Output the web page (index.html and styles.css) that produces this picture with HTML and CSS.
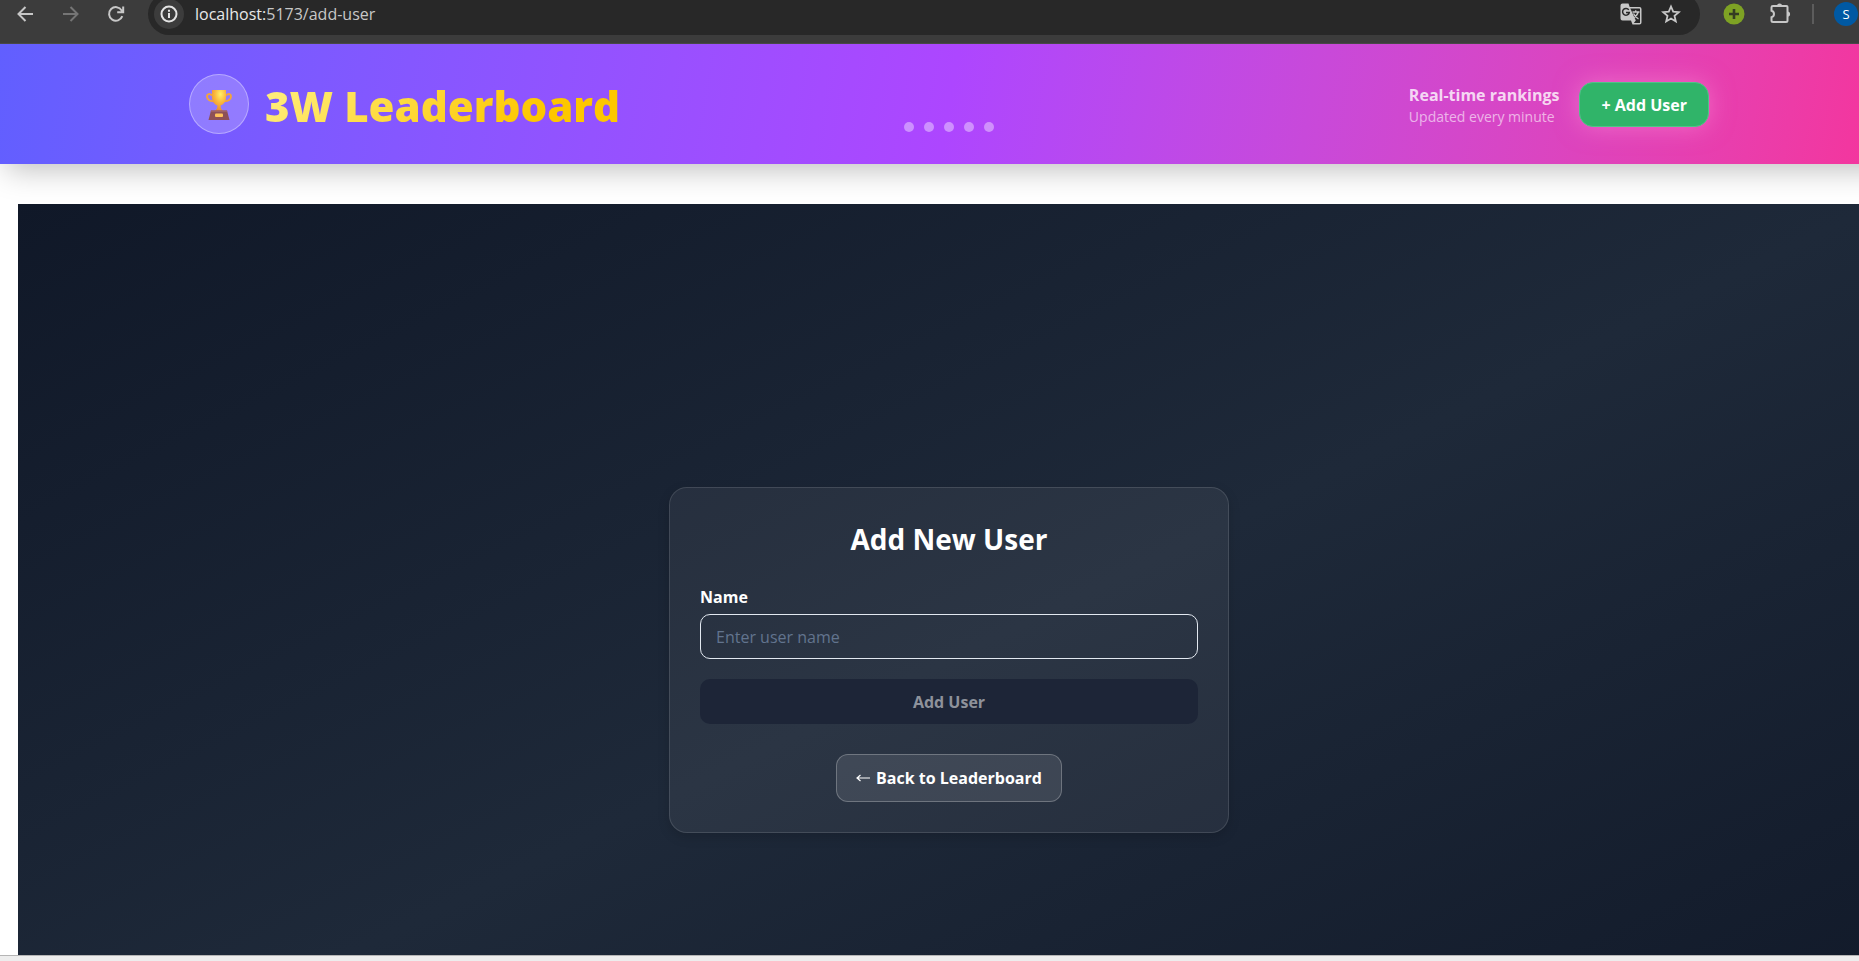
FILE: index.html
```html
<!DOCTYPE html>
<html lang="en">
<head>
<meta charset="utf-8">
<title>3W Leaderboard</title>
<link rel="stylesheet" href="styles.css">
</head>
<body>
<nav class="toolbar" aria-label="Browser">
  <button class="tool" type="button" aria-label="Back"><svg width="20" height="20" viewBox="0 0 20 20" fill="none" stroke="currentColor" stroke-width="2"><path d="M17 10H3M9.500 3 2.500 10l7 7"/></svg></button>
  <button class="tool tool-off" type="button" aria-label="Forward"><svg width="20" height="20" viewBox="0 0 20 20" fill="none" stroke="currentColor" stroke-width="2"><path d="M2 10h14M9.500 3l7 7-7 7"/></svg></button>
  <button class="tool" type="button" aria-label="Reload"><svg width="20" height="20" viewBox="0 0 20 20" fill="none" stroke="currentColor" stroke-width="2"><path d="M16.300 12.200a6.800 6.800 0 1 1-.6-5.800L17 8M17.200 2.500v5.700h-6"/></svg></button>
  <div class="address">
    <button class="info" type="button" aria-label="Site information"><svg width="18" height="18" viewBox="0 0 18 18" fill="none" stroke="currentColor" stroke-width="2"><circle cx="9" cy="9" r="7.500"/><path d="M9 8v5M9 4.800v2"/></svg></button>
    <span class="url"><span class="host">localhost:</span>5173/add-user</span>
    <button class="tool" type="button" aria-label="Translate"><svg width="22" height="22" viewBox="0 0 22 22"><path d="M2.500.5h6l1.200 3.500h9.800a2 2 0 0 1 2 2v13.500a2 2 0 0 1-2 2h-7L11 17.500H2.500a2 2 0 0 1-2-2v-13a2 2 0 0 1 2-2z" fill="#c7c7c7"/><path d="M10.300 5.500h9.200q.5 0 .5.500v13.500q0 .5-.5.500h-5.700l2-2.500z" fill="#282828"/><path d="M8.800 6.900A3.400 3.400 0 1 0 9.300 9.500H6" fill="none" stroke="#282828" stroke-width="1.500"/><path d="M12.500 9h7M15.700 7.300V9M18.200 9q-.8 3.500-5 6M13.500 10.500q1.500 3.500 5 5.500" fill="none" stroke="#c7c7c7" stroke-width="1.300"/></svg></button>
    <button class="tool" type="button" aria-label="Bookmark"><svg width="20" height="20" viewBox="0 0 20 20" fill="none" stroke="currentColor" stroke-width="1.800"><path d="m10 2.500 2.200 5.200 5.600.5-4.300 3.700 1.300 5.500-4.800-2.900-4.800 2.900 1.300-5.500-4.300-3.700 5.600-.5z"/></svg></button>
  </div>
  <div class="extensions">
    <button class="tool" type="button" aria-label="Extension"><svg width="22" height="22" viewBox="0 0 22 22"><circle cx="11" cy="11" r="10.500" fill="#7ea224"/><path d="M11 6v10M6 11h10" stroke="#343c22" stroke-width="2.600"/></svg></button>
    <button class="tool" type="button" aria-label="Extensions"><svg width="22" height="22" viewBox="0 0 22 22"><path d="M4 3h13.500q1 0 1 1v13.500q0 1.500-1.500 1.500H4q-1.500 0-1.500-1.500v-3.300a3.300 3.300 0 0 0 0-6.400V4.200Q2.500 3 4 3z" fill="none" stroke="#c7c7c7" stroke-width="2"/><path d="M8 3a2.500 2.500 0 0 1 5 0zM18.500 8.500a2.600 2.600 0 0 1 0 5.200z" fill="#c7c7c7"/></svg></button>
    <span class="divider"></span>
    <button class="profile" type="button" aria-label="Profile">S</button>
  </div>
</nav>
<div class="page">
  <header class="header">
    <div class="header-inner">
      <div class="brand">
        <span class="badge"><svg width="26" height="32" viewBox="0 0 26 32">
          <defs><radialGradient id="cup" cx=".6" cy=".2" r=".8"><stop offset="0" stop-color="#fff06a"/><stop offset=".5" stop-color="#fbb83c"/><stop offset="1" stop-color="#e88a35"/></radialGradient></defs>
          <path d="M6 7.500C3.500 5 1 6 1 8.500s3 5.200 7 4.500M20 7.500c2.500-2.500 5-1.500 5 1s-3 5.200-7 4.500" fill="none" stroke="#f3a43b" stroke-width="1.900"/>
          <path d="M6 2h14v7.500c0 4-2.500 7-5.500 8l.5 3 2 2.500H9l2-2.500.5-3C8.500 16.500 6 13.500 6 9.500z" fill="url(#cup)"/>
          <path d="M5 22.500h16L23.500 32h-21z" fill="#8d5057"/><path d="M5 22.500h16l.3 1.200H4.700z" fill="#a5676b"/><rect x="9" y="25.500" width="8" height="3.500" rx="1" fill="#ffc15a"/></svg></span>
        <h1 class="title">3W Leaderboard</h1>
      </div>
      <div class="header-side">
        <div class="status"><p class="status-main">Real-time rankings</p><p class="status-sub">Updated every minute</p></div>
        <a class="add-link" href="#name">+ Add User</a>
      </div>
    </div>
    <div class="dots"><i></i><i></i><i></i><i></i><i></i></div>
  </header>
  <main class="stage">
    <section class="card">
      <h2 class="card-title">Add New User</h2>
      <form class="form">
        <label class="label" for="name">Name</label>
        <input class="input" id="name" type="text" placeholder="Enter user name">
        <button class="submit" type="submit" disabled>Add User</button>
      </form>
      <a class="back" href="#leaderboard"><svg width="14" height="8" viewBox="0 0 14 8" fill="none" stroke="currentColor" stroke-width="1.200"><path d="M14 4H1M4.500 1 1 4l3.500 3"/></svg>Back to Leaderboard</a>
    </section>
  </main>
</div>
<div class="window-edge"></div>
</body>
</html>
```

FILE: styles.css
```css
* { box-sizing: border-box; }
body {
  margin: 0;
  height: 100vh;
  display: flex;
  flex-direction: column;
  overflow: hidden;
  background: #fff;
  font-family: "Open Sans", "Noto Sans", sans-serif;
  font-size: 16px;
  line-height: 24px;
}
h1, h2, p { margin: 0; }
button { font: inherit; border: 0; padding: 0; background: none; color: inherit; }
a { color: inherit; text-decoration: none; }
svg { display: block; flex: none; }

.toolbar {
  flex: none;
  display: flex;
  align-items: center;
  height: 51px;
  margin-top: -7px;
  padding: 0 1px 9px 16px;
  gap: 25px;
  background: #3c3c3c;
  border-bottom: 1px solid #484848;
  color: #c7c7c7;
}
.tool-off { color: #757575; }
.address {
  flex: 1;
  display: flex;
  align-items: center;
  gap: 19px;
  height: 42px;
  margin-left: -3px;
  padding: 0 19px 0 6px;
  border-radius: 21px;
  background: #282828;
}
.info {
  display: grid;
  place-items: center;
  width: 30px;
  height: 30px;
  border-radius: 50%;
  background: #3c3c3c;
  color: #e3e3e3;
}
.url { flex: 1; margin-left: -8px; color: #c7c7c7; }
.host { color: #e8e8e8; }
.extensions { display: flex; align-items: center; gap: 24px; margin-left: -2px; }
.divider { width: 2px; height: 20px; margin-left: -3px; background: #5c5c5c; }
.profile {
  width: 24px;
  height: 24px;
  margin-left: -4px;
  border-radius: 50%;
  background: #0059a3;
  color: #fff;
  font-size: 13px;
}

.page { flex: 1; min-height: 0; width: calc(100% + 39px); overflow: hidden; }
.header {
  position: relative;
  padding: 30px 0;
  background: linear-gradient(100deg in oklab, #615fff, #ad46ff 50%, #f6339a);
  box-shadow: 0 12px 28px -6px rgba(0, 0, 0, .25);
}
.header-inner {
  display: flex;
  align-items: center;
  justify-content: space-between;
  width: 82%;
  max-width: 1520px;
  margin: 0 auto;
}
.brand { display: flex; align-items: center; gap: 16px; }
.badge {
  display: grid;
  place-items: center;
  width: 60px;
  height: 60px;
  border: 1px solid rgba(255, 255, 255, .35);
  border-radius: 50%;
  background: rgba(255, 255, 255, .2);
}
.title {
  padding-top: 4px;
  font-size: 42px;
  font-weight: 800;
  line-height: 56px;
  background: linear-gradient(135deg, #fff085, #fdc700 75%);
  background-clip: text;
  -webkit-background-clip: text;
  color: transparent;
}
.header-side { display: flex; align-items: center; gap: 20px; }
.status { padding-top: 4px; }
.status-main { color: rgba(255, 255, 255, .8); font-weight: 700; line-height: 22px; }
.status-sub { color: rgba(255, 255, 255, .6); font-size: 14px; line-height: 22px; }
.add-link {
  padding: 10px 21px 8px;
  border: 1px solid #4fc487;
  border-radius: 14px;
  background: #30b469;
  box-shadow: 0 0 24px rgba(255, 150, 215, .5);
  color: #fff;
  font-weight: 700;
  line-height: 25px;
}
.dots {
  position: absolute;
  left: 50%;
  bottom: 32px;
  display: flex;
  gap: 10px;
  transform: translateX(-50%);
}
.dots i { width: 10px; height: 10px; border-radius: 50%; background: rgba(255, 255, 255, .4); }

.stage {
  display: grid;
  place-items: center;
  min-height: 912px;
  margin: 40px 18px 0;
  background: linear-gradient(to bottom right, #101828, #1e2939, #101828);
}
.card {
  display: flex;
  flex-direction: column;
  align-items: center;
  width: 560px;
  padding: 30px;
  border: 1px solid rgba(255, 255, 255, .12);
  border-radius: 18px;
  background: rgba(255, 255, 255, .06);
  box-shadow: 0 4px 12px rgba(0, 0, 0, .15);
  color: #fff;
}
.card-title { font-size: 28px; font-weight: 700; line-height: 42px; margin-bottom: 24px; }
.form { display: flex; flex-direction: column; width: 100%; }
.label { font-weight: 700; line-height: 26px; margin-bottom: 4px; }
.input {
  height: 45px;
  padding: 0 15px;
  border: 1px solid #e2e8f0;
  border-radius: 10px;
  background: transparent;
  color: #fff;
  font: inherit;
}
.input::placeholder { color: #62748e; opacity: 1; }
.submit {
  height: 45px;
  margin-top: 20px;
  border-radius: 10px;
  background: #1d2537;
  color: #8e929b;
  font-weight: 700;
}
.back {
  display: flex;
  align-items: center;
  gap: 6px;
  margin-top: 30px;
  padding: 11px 19px;
  border: 1px solid rgba(255, 255, 255, .25);
  border-radius: 12px;
  background: rgba(255, 255, 255, .1);
  font-weight: 700;
  line-height: 24px;
}
.window-edge { flex: none; height: 6px; border-top: 1px solid #b5b5b5; background: #ededed; }
```
